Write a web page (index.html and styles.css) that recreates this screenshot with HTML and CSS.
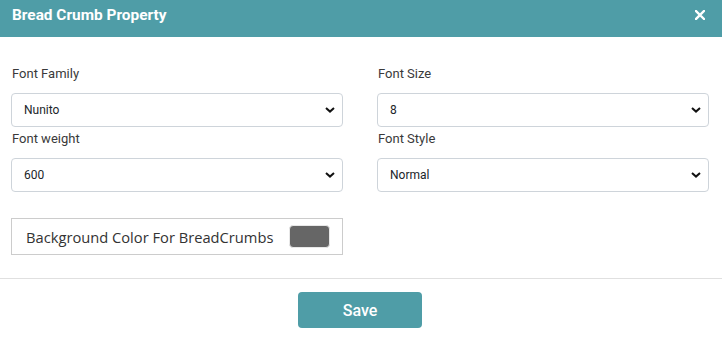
FILE: index.html
```html
<!DOCTYPE html>
<html>
<head>
<meta charset="utf-8">
<link rel="stylesheet" href="styles.css">
</head>
<body>
<div class="modal">
  <div class="header">
    <span class="title">Bread Crumb Property</span>
    <svg class="close" width="10" height="10" viewBox="0 0 10 10"><path d="M1 1L9 9M9 1L1 9" stroke="#fff" stroke-width="2.4" stroke-linecap="square"/></svg>
  </div>
  <div class="content">
    <div class="grid">
      <div class="field">
        <div class="label">Font Family</div>
        <div class="select"><span>Nunito</span><svg width="10" height="6" viewBox="0 0 10 6"><path d="M1 1L5 4.6L9 1" fill="none" stroke="#111" stroke-width="2"/></svg></div>
      </div>
      <div class="field">
        <div class="label">Font Size</div>
        <div class="select"><span>8</span><svg width="10" height="6" viewBox="0 0 10 6"><path d="M1 1L5 4.6L9 1" fill="none" stroke="#111" stroke-width="2"/></svg></div>
      </div>
      <div class="field">
        <div class="label">Font weight</div>
        <div class="select"><span>600</span><svg width="10" height="6" viewBox="0 0 10 6"><path d="M1 1L5 4.6L9 1" fill="none" stroke="#111" stroke-width="2"/></svg></div>
      </div>
      <div class="field">
        <div class="label">Font Style</div>
        <div class="select"><span>Normal</span><svg width="10" height="6" viewBox="0 0 10 6"><path d="M1 1L5 4.6L9 1" fill="none" stroke="#111" stroke-width="2"/></svg></div>
      </div>
    </div>
    <div class="bgbox">
      <span class="bgtext">Background Color For BreadCrumbs</span>
      <span class="swatch"></span>
    </div>
  </div>
  <div class="divider"></div>
  <div class="footer">
    <button class="save">Save</button>
  </div>
</div>
</body>
</html>
```
FILE: styles.css
```css
html, body {
  margin: 0;
  padding: 0;
  background: #fff;
}
body {
  font-family: Roboto, "Liberation Sans", sans-serif;
  width: 722px;
  height: 338px;
  overflow: hidden;
}
.header {
  height: 37px;
  box-sizing: border-box;
  background: #4f9da7;
  display: flex;
  justify-content: space-between;
  align-items: flex-start;
  padding: 7px 17px 0 12px;
}
.title {
  color: #fff;
  font-weight: 700;
  font-size: 15.4px;
  line-height: 17.6px;
}
.close {
  margin-top: 3px;
  display: block;
}
.content {
  padding: 27px 13px 0 11px;
}
.grid {
  display: grid;
  grid-template-columns: 332px 332px;
  column-gap: 34px;
  row-gap: 2px;
}
.label {
  font-size: 13px;
  line-height: 20px;
  color: #3a3a3a;
  margin-bottom: 9px;
  padding-left: 1px;
}
.select {
  height: 34px;
  box-sizing: border-box;
  border: 1px solid #ced4da;
  border-radius: 4px;
  display: flex;
  align-items: center;
  justify-content: space-between;
  padding: 0 7px 0 12px;
  font-size: 12px;
  color: #212529;
}
.select svg {
  display: block;
}
.bgbox {
  margin-top: 26px;
  width: 332px;
  height: 37px;
  box-sizing: border-box;
  border: 1px solid #ccc;
  display: flex;
  align-items: center;
  padding: 0 12px 0 14px;
}
.bgtext {
  font-family: "Open Sans", sans-serif;
  font-size: 14.7px;
  color: #333;
}
.swatch {
  margin-left: auto;
  width: 41px;
  height: 23px;
  background: #666;
  border-radius: 4px;
  border: 1px solid #e8e8e8;
  box-sizing: border-box;
}
.divider {
  margin-top: 23px;
  height: 1px;
  background: #e0e0e0;
}
.footer {
  display: flex;
  justify-content: center;
  padding-top: 13px;
  padding-right: 2px;
}
.save {
  width: 124px;
  height: 36px;
  border: none;
  border-radius: 4px;
  background: #4f9da7;
  color: #fff;
  font-family: Roboto, "Liberation Sans", sans-serif;
  font-size: 16px;
  font-weight: 500;
}
```
